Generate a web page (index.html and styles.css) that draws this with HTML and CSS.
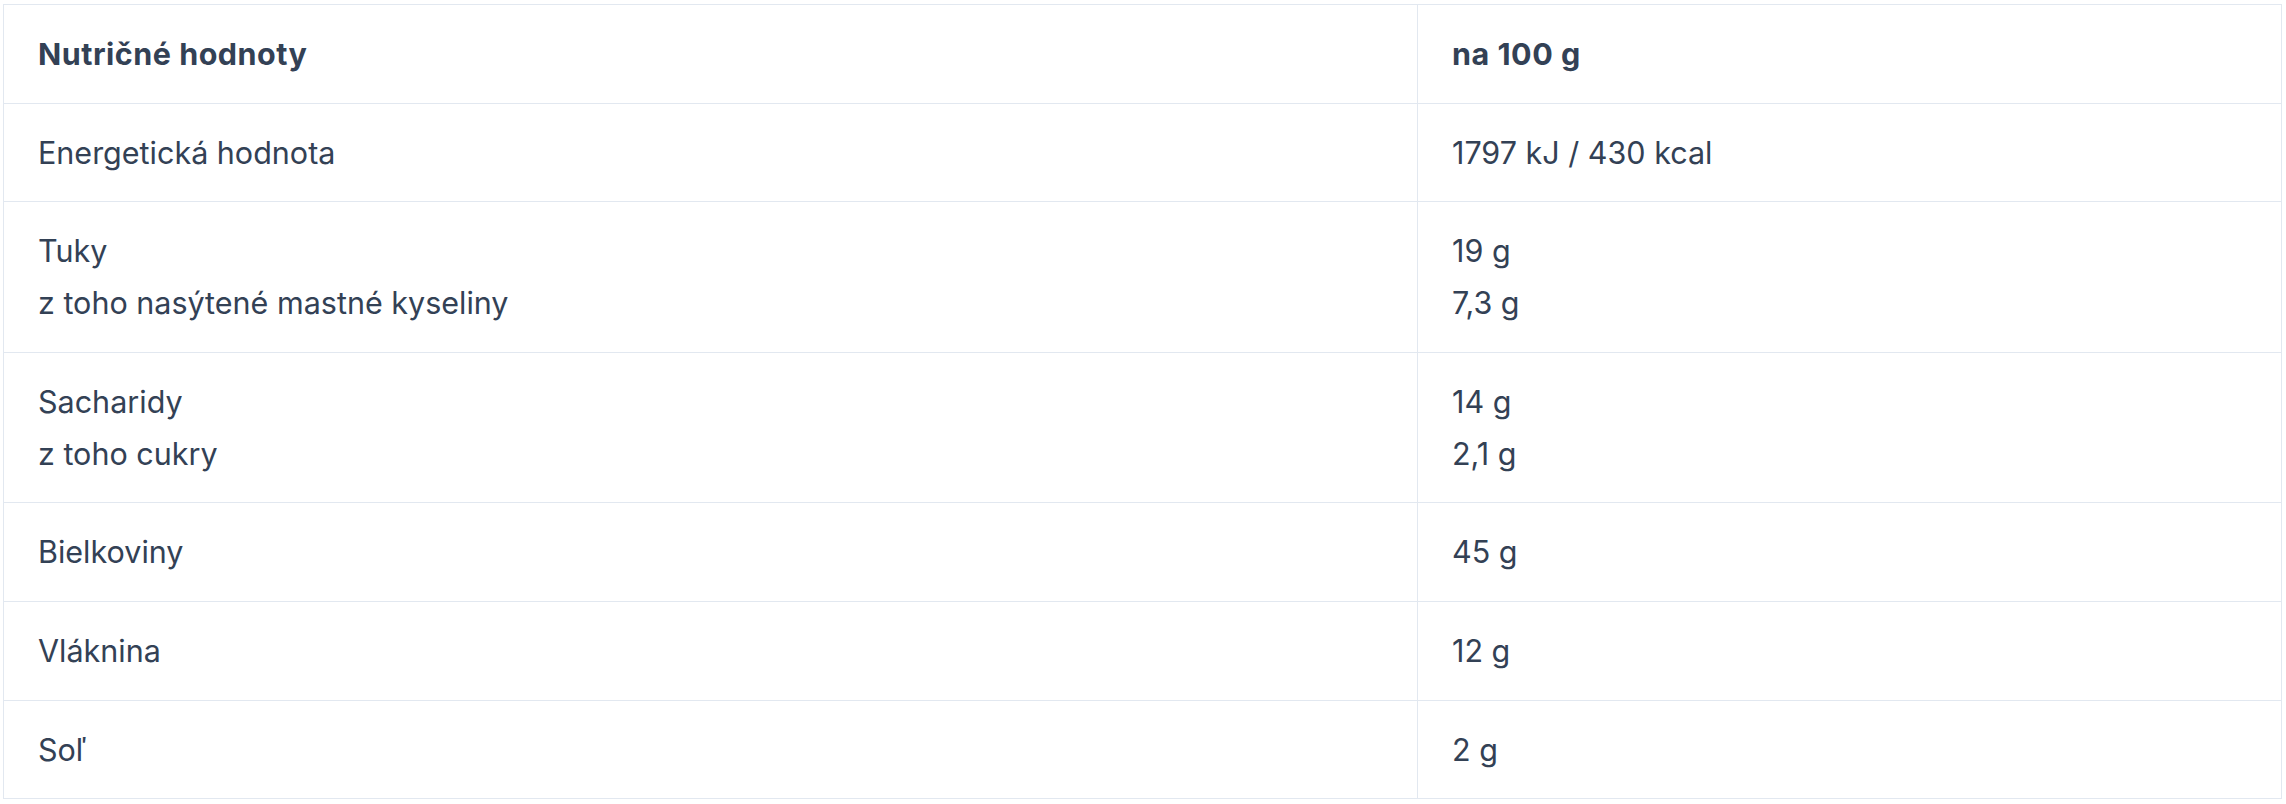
FILE: index.html
```html
<!DOCTYPE html>
<html lang="sk">
<head>
<meta charset="utf-8">
<link rel="stylesheet" href="styles.css">
</head>
<body>
<div class="wrap">
<table class="nutri">
  <colgroup><col class="c1"><col class="c2"></colgroup>
  <thead>
    <tr><th>Nutričné hodnoty</th><th>na 100 g</th></tr>
  </thead>
  <tbody>
    <tr><td>Energetická hodnota</td><td>1797 kJ / 430 kcal</td></tr>
    <tr><td><div>Tuky</div><div>z toho nasýtené mastné kyseliny</div></td><td><div>19 g</div><div>7,3 g</div></td></tr>
    <tr><td><div>Sacharidy</div><div>z toho cukry</div></td><td><div>14 g</div><div>2,1 g</div></td></tr>
    <tr><td>Bielkoviny</td><td>45 g</td></tr>
    <tr><td>Vláknina</td><td>12 g</td></tr>
    <tr><td>Soľ</td><td>2 g</td></tr>
  </tbody>
</table>
</div>
</body>
</html>
```
FILE: styles.css
```css
html, body {
  margin: 0;
  padding: 0;
  background: #ffffff;
}
.wrap {
  padding: 4px 0 0 3px;
}
.nutri {
  border-collapse: collapse;
  table-layout: fixed;
  width: 2279px;
  font-family: Inter, "Noto Sans", sans-serif;
  font-size: 30.5px;
  line-height: 52px;
  color: #334155;
}
.nutri .c1 { width: 1414px; }
.nutri th,
.nutri td {
  border: 1px solid #e2e8f0;
  padding: 23px 34px 22.6px 34px;
  text-align: left;
  vertical-align: top;
}
.nutri th {
  font-weight: 700;
  letter-spacing: 0.5px;
  color: #334155;
}
.nutri td {
  font-weight: 400;
}
```
